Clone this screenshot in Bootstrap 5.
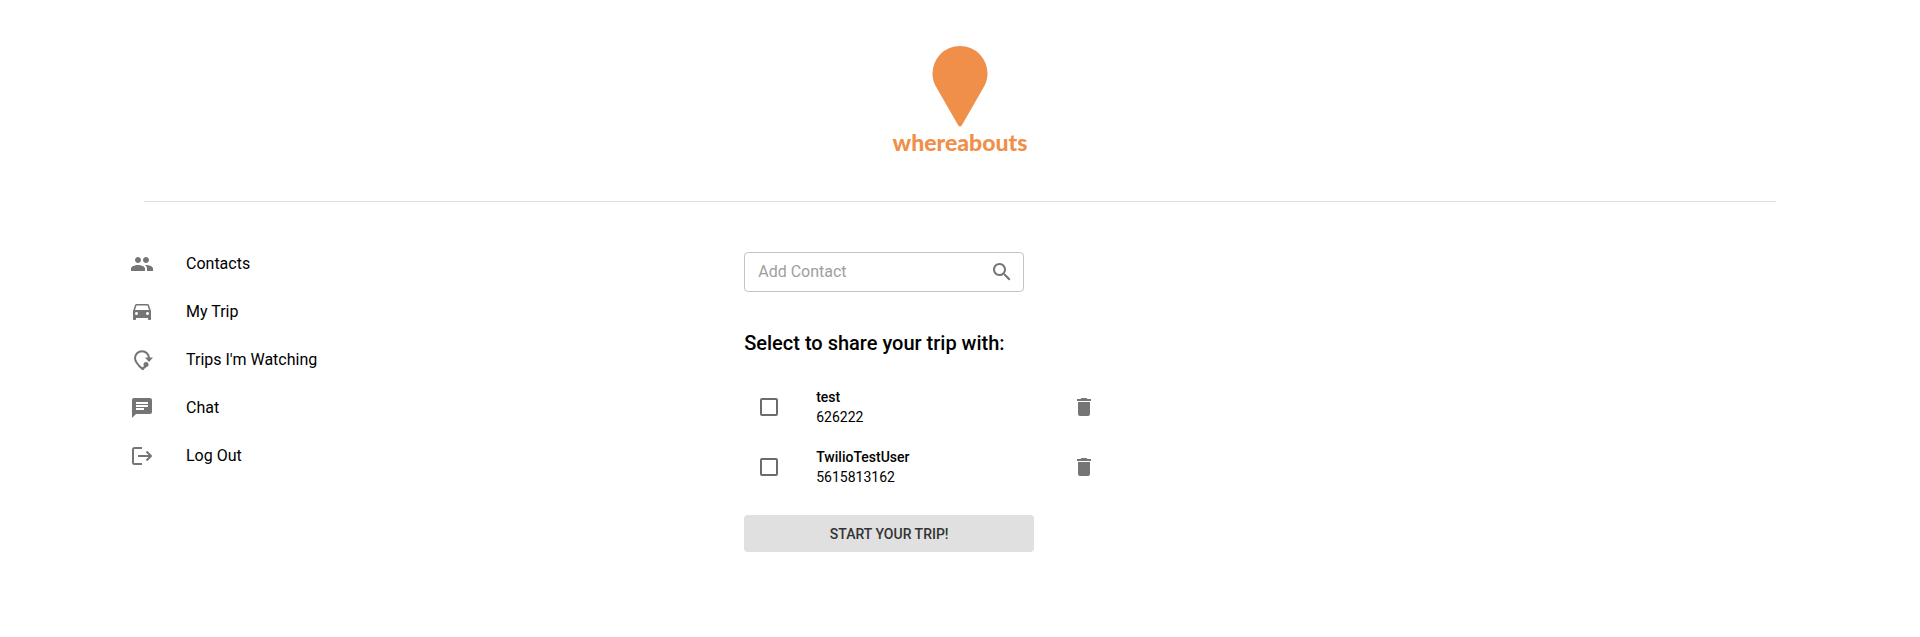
<!DOCTYPE html>
<html lang="en">
<head>
<meta charset="utf-8">
<meta name="viewport" content="width=device-width, initial-scale=1">
<title>whereabouts</title>
<link href="https://cdn.jsdelivr.net/npm/bootstrap@5.3.0/dist/css/bootstrap.min.css" rel="stylesheet">
<style>
  body { font-family: Roboto, "Liberation Sans", sans-serif; color: #000; font-size: 16px; line-height: 24px; }
  svg { display: block; fill: #757575; flex-shrink: 0; }
  .brand { padding: 46px 0 44px; color: #f08f49; }
  .brand svg { fill: #f08f49; }
  .brand-name { font: 900 23px/30px Lato, sans-serif; color: #f08f49; text-decoration: none; }
  .divider { width: 85%; margin: 0 auto; border-top: 1px solid #e0e0e0; }
  .page-body { padding: 38px 130px 0; }
  .side-nav { width: 37%; }
  .side-link { height: 48px; gap: 32px; color: #000; text-decoration: none; }
  .search-box { width: 280px; height: 40px; border: 1px solid #c4c4c4; border-radius: 4px; padding: 0 9px 0 13px; margin-top: 12px; }
  .search-box input { border: 0; outline: 0; min-width: 0; color: #000; background: none; padding: 0; }
  .search-box input::placeholder { color: #9e9e9e; opacity: 1; }
  .icon-btn { border: 0; background: none; padding: 0; }
  .share-title { font-size: 20px; line-height: 32px; font-weight: 500; margin: 35px 0 18px; }
  .contact-list { width: 360px; }
  .contact-item { height: 60px; padding: 0 8px 0 16px; font-size: 14px; line-height: 20px; }
  .contact-item input { appearance: none; width: 18px; height: 18px; margin: 0 38px 0 0; border: 2px solid #6c6c6c; border-radius: 2px; }
  .contact-item input:checked { background: #f08f49; }
  .contact-name { font-weight: 500; }
  .start-btn { width: 290px; height: 37px; margin-top: 18px; border: 0; border-radius: 4px; background: #e0e0e0; color: #333; font-size: 14px; font-weight: 500; }
</style>
</head>
<body>
<header>
  <div class="brand d-flex flex-column align-items-center">
    <svg width="56" height="81" viewBox="0 0 56 81" aria-hidden="true"><path d="M28 0A27.5 27.5 0 0 0 .5 27.5C.5 33 2 37.500 4.500 41.500L26 79q2 3 4 0L51.500 41.500C54 37.500 55.500 33 55.500 27.500A27.500 27.500 0 0 0 28 0Z"/></svg>
    <a class="brand-name" href="#">whereabouts</a>
  </div>
  <div class="divider"></div>
</header>
<main class="page-body d-flex">
  <nav class="side-nav d-flex flex-column" aria-label="Main">
    <a class="side-link d-flex align-items-center" href="#"><svg width="24" height="24" viewBox="0 0 24 24"><path d="M16 11c1.660 0 2.990-1.340 2.990-3S17.660 5 16 5s-3 1.340-3 3 1.340 3 3 3zm-8 0c1.660 0 2.990-1.340 2.990-3S9.660 5 8 5 5 6.340 5 8s1.340 3 3 3zm0 2c-2.330 0-7 1.170-7 3.500V19h14v-2.500c0-2.330-4.670-3.500-7-3.500zm8 0c-.29 0-.62.020-.97.050 1.160.84 1.970 1.970 1.970 3.450V19h6v-2.500c0-2.330-4.670-3.500-7-3.500z"/></svg>Contacts</a>
    <a class="side-link d-flex align-items-center" href="#"><svg width="24" height="24" viewBox="0 0 24 24"><path d="M18.920 5.010C18.720 4.420 18.160 4 17.500 4h-11c-.66 0-1.210.42-1.420 1.010L3 11v8c0 .55.450 1 1 1h1c.55 0 1-.45 1-1v-1h12v1c0 .55.450 1 1 1h1c.55 0 1-.45 1-1v-8l-2.080-5.990zM6.500 15c-.83 0-1.500-.67-1.500-1.500S5.670 12 6.500 12s1.500.67 1.500 1.500S7.330 15 6.500 15zm11 0c-.83 0-1.500-.67-1.500-1.500s.67-1.500 1.500-1.500 1.500.67 1.500 1.500-.67 1.500-1.500 1.500zM5 10l1.500-4.500h11L19 10H5z"/></svg>My Trip</a>
    <a class="side-link d-flex align-items-center" href="#"><svg width="24" height="24" viewBox="0 0 24 24"><path d="M13.500 20.500l-1 .5C8.500 17.500 5 14 5 10.200a7 7 0 0 1 14 0" fill="none" stroke="#757575" stroke-width="2"/><path d="M15 9.500h8L19 14z"/><circle cx="16" cy="16.500" r="2.500"/><path d="M11.500 20.200l3.500-3 1.800 1.500-4.200 3.600z"/></svg>Trips I'm Watching</a>
    <a class="side-link d-flex align-items-center" href="#"><svg width="24" height="24" viewBox="0 0 24 24"><path d="M20 2H4c-1.100 0-1.990.9-1.990 2L2 22l4-4h14c1.100 0 2-.9 2-2V4c0-1.100-.9-2-2-2zM6 6h12v2H6zM6 9h12v2H6zM6 12h8v2H6z" fill-rule="evenodd"/></svg>Chat</a>
    <a class="side-link d-flex align-items-center" href="#"><svg width="24" height="24" viewBox="0 0 24 24"><path d="M12 4H4.500Q3 4 3 5.500v13Q3 20 4.500 20H12M8 12h13M16.500 7.500L21 12l-4.500 4.500" fill="none" stroke="#757575" stroke-width="2"/></svg>Log Out</a>
  </nav>
  <section class="flex-grow-1">
    <form class="search-box d-flex align-items-center">
      <input class="flex-grow-1" type="text" placeholder="Add Contact" aria-label="Add Contact">
      <button class="icon-btn" type="button" aria-label="Search"><svg width="24" height="24" viewBox="0 0 24 24"><path d="M15.500 14h-.79l-.28-.27C15.410 12.590 16 11.110 16 9.500 16 5.910 13.090 3 9.500 3S3 5.910 3 9.500 5.910 16 9.500 16c1.610 0 3.090-.59 4.230-1.570l.27.28v.79l5 4.990L20.490 19l-4.990-5zm-6 0C7.010 14 5 11.990 5 9.500S7.010 5 9.500 5 14 7.010 14 9.500 11.990 14 9.500 14z"/></svg></button>
    </form>
    <h2 class="share-title">Select to share your trip with:</h2>
    <ul class="contact-list list-unstyled mb-0">
      <li class="contact-item d-flex align-items-center">
        <input type="checkbox" id="contact-1">
        <label class="flex-grow-1" for="contact-1"><span class="contact-name d-block">test</span><span class="d-block">626222</span></label>
        <button class="icon-btn" type="button" aria-label="Delete test"><svg width="24" height="24" viewBox="0 0 24 24"><path d="M6 19c0 1.100.9 2 2 2h8c1.100 0 2-.9 2-2V7H6v12zM19 4h-3.500l-1-1h-5l-1 1H5v2h14V4z"/></svg></button>
      </li>
      <li class="contact-item d-flex align-items-center">
        <input type="checkbox" id="contact-2">
        <label class="flex-grow-1" for="contact-2"><span class="contact-name d-block">TwilioTestUser</span><span class="d-block">5615813162</span></label>
        <button class="icon-btn" type="button" aria-label="Delete TwilioTestUser"><svg width="24" height="24" viewBox="0 0 24 24"><path d="M6 19c0 1.100.9 2 2 2h8c1.100 0 2-.9 2-2V7H6v12zM19 4h-3.500l-1-1h-5l-1 1H5v2h14V4z"/></svg></button>
      </li>
    </ul>
    <button class="start-btn text-uppercase" type="button">Start your trip!</button>
  </section>
</main>
<script src="https://cdn.jsdelivr.net/npm/bootstrap@5.3.0/dist/js/bootstrap.bundle.min.js"></script>
</body>
</html>
